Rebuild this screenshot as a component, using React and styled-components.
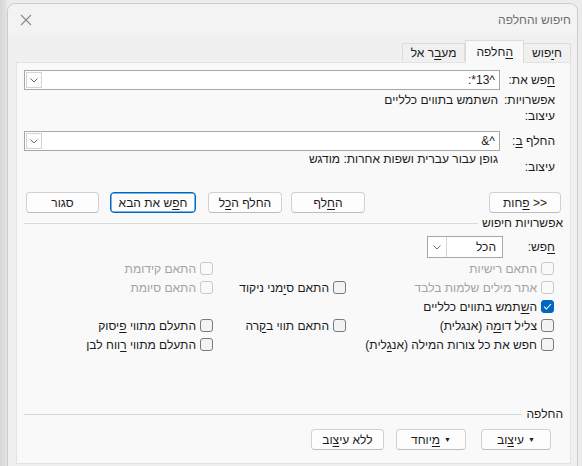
import React from "react";
import styled, { createGlobalStyle, css } from "styled-components";

const Global = createGlobalStyle`
  html, body {
    margin: 0;
    padding: 0;
    background: linear-gradient(90deg, #d6d6d6 0px, #e4e4e4 7px, #ececec 7px);
    font-family: "Liberation Sans", "DejaVu Sans", sans-serif;
    font-size: 12px;
    color: #1b1b1b;
    overflow: hidden;
  }
  u {
    text-underline-offset: 2px;
  }
`;

const Window = styled.div`
  margin: 3px 0 0 7px;
  width: 571px;
  height: 470px;
  box-sizing: border-box;
  border: 1px solid #cdcdcd;
  border-radius: 8px 8px 0 0;
  background: #f0f0f0;
  direction: rtl;
  display: flex;
  flex-direction: column;
`;

const TitleBar = styled.div`
  height: 32px;
  display: flex;
  align-items: center;
  justify-content: space-between;
  padding: 0 6px 0 12px;
  background: #f3f3f3;
  border-radius: 8px 8px 0 0;
`;

const Title = styled.span`
  color: #6e6e6e;
  font-size: 12px;
`;

const Tabs = styled.div`
  display: flex;
  align-items: flex-end;
  height: 22px;
  margin: 4px 6px 0 8px;
  position: relative;
  z-index: 1;
`;

const Tab = styled.div`
  height: 18px;
  padding: 0 8px;
  display: flex;
  align-items: center;
  box-sizing: border-box;
  border: 1px solid #dcdcdc;
  border-bottom: none;
  border-left: none;
  background: #f0f0f0;
  margin-bottom: 1px;
  ${(p) =>
    p.$active &&
    css`
      height: 23px;
      margin-bottom: -1px;
      background: #f9f9f9;
      border-left: 1px solid #dcdcdc;
      padding: 0 10px;
    `}
  ${(p) =>
    p.$last &&
    css`
      border-left: 1px solid #dcdcdc;
    `}
`;

const Panel = styled.div`
  margin: 0 6px 0 8px;
  height: 402px;
  box-sizing: border-box;
  border: 1px solid #e3e3e3;
  background: #f9f9f9;
  padding: 7px 15px 0 7px;
  display: flex;
  flex-direction: column;
`;

const FieldRow = styled.div`
  display: flex;
  align-items: center;
  height: 20px;
  margin-top: ${(p) => p.$top || 0}px;
`;

const Label = styled.div`
  width: ${(p) => p.$w || 55}px;
  flex-shrink: 0;
  white-space: nowrap;
  margin-top: ${(p) => p.$top || 0}px;
`;

const Combo = styled.div`
  flex: 1;
  height: 20px;
  box-sizing: border-box;
  border: 1px solid #a7a7a7;
  background: #fff;
  display: flex;
  align-items: center;
  justify-content: space-between;
  padding-right: 4px;
`;

const DropBtn = styled.div`
  width: 16px;
  height: 16px;
  margin-left: 1px;
  box-sizing: border-box;
  border: 1px solid #d4d4d4;
  background: #fdfdfd;
  display: flex;
  align-items: center;
  justify-content: center;
`;

const InfoRow = styled.div`
  display: flex;
  align-items: flex-start;
  line-height: 16px;
  margin-top: ${(p) => p.$top || 0}px;
`;

const Value = styled.div`
  white-space: nowrap;
`;

const ButtonRow = styled.div`
  display: flex;
  align-items: center;
  margin: 17px -6px 0 2px;
`;

const Spacer = styled.div`
  flex: 1;
`;

const Button = styled.div`
  width: ${(p) => p.$w || 72}px;
  height: 21px;
  box-sizing: border-box;
  border: 1px solid #d1d1d1;
  border-bottom-color: #bcbcbc;
  border-radius: 4px;
  background: #fdfdfd;
  display: flex;
  align-items: center;
  justify-content: center;
  gap: 4px;
  margin-left: ${(p) => p.$gap || 0}px;
  white-space: nowrap;
  ${(p) =>
    p.$focus &&
    css`
      border: 1px solid #0067c0;
      box-shadow: inset 0 0 0 0.5px #0067c0;
    `}
`;

const Section = styled.div`
  display: flex;
  align-items: center;
  gap: 4px;
  margin: ${(p) => p.$top || 0}px -8px 0 0;
  line-height: 14px;
`;

const Rule = styled.div`
  flex: 1;
  height: 1px;
  background: #dadada;
`;

const SearchSelectRow = styled.div`
  display: flex;
  align-items: center;
  margin-top: 6px;
  height: 22px;
`;

const Select = styled.div`
  width: 76px;
  height: 22px;
  box-sizing: border-box;
  border: 1px solid #a7a7a7;
  background: #fff;
  display: flex;
  align-items: center;
  justify-content: space-between;
  padding-right: 6px;
`;

const SelectArrow = styled.div`
  width: 18px;
  height: 20px;
  border-right: 1px solid #d4d4d4;
  display: flex;
  align-items: center;
  justify-content: center;
`;

const Options = styled.div`
  display: grid;
  grid-template-columns: 208px 133px 1fr;
  grid-auto-rows: 19px;
  margin: 1px 1px 0 0;
`;

const Check = styled.div`
  display: flex;
  align-items: center;
  gap: 4px;
  white-space: nowrap;
  color: ${(p) => (p.$disabled ? "#a3a3a3" : "#1b1b1b")};
  grid-column: ${(p) => p.$col};
`;

const Box = styled.div`
  width: 13px;
  height: 13px;
  box-sizing: border-box;
  border-radius: 3px;
  border: 1px solid ${(p) => (p.$disabled ? "#c9c9c9" : "#7a7a7a")};
  background: ${(p) => (p.$disabled ? "#f9f9f9" : "#f3f3f3")};
  display: flex;
  align-items: center;
  justify-content: center;
  ${(p) =>
    p.$checked &&
    css`
      border-color: #0067c0;
      background: #0067c0;
    `}
`;

const BottomButtons = styled.div`
  display: flex;
  margin: 8px 4px 0 0;
`;

const Caret = styled.span`
  font-size: 7px;
  line-height: 1;
`;

function Chevron() {
  return (
    <svg width="8" height="5" viewBox="0 0 8 5">
      <path d="M0.5 0.5 L4 4 L7.5 0.5" fill="none" stroke="#6a6a6a" strokeWidth="1" />
    </svg>
  );
}

function CloseIcon() {
  return (
    <svg width="12" height="12" viewBox="0 0 12 12">
      <path d="M1 1 L11 11 M11 1 L1 11" stroke="#8a8a8a" strokeWidth="1.1" />
    </svg>
  );
}

function CheckItem({ col, disabled, checked, children }) {
  return (
    <Check $col={col} $disabled={disabled}>
      <Box $disabled={disabled} $checked={checked}>
        {checked && (
          <svg width="9" height="7" viewBox="0 0 9 7">
            <path d="M1 3.6 L3.4 6 L8 1" fill="none" stroke="#fff" strokeWidth="1.1" />
          </svg>
        )}
      </Box>
      <span>{children}</span>
    </Check>
  );
}

export default function App() {
  return (
    <>
      <Global />
      <Window>
        <TitleBar>
          <Title>חיפוש והחלפה</Title>
          <CloseIcon />
        </TitleBar>
        <Tabs>
          <Tab>
            <span>
              ח<u>י</u>פוש
            </span>
          </Tab>
          <Tab $active>
            <span>
              <u>ה</u>חלפה
            </span>
          </Tab>
          <Tab $last>
            <span>
              מע<u>ב</u>ר אל
            </span>
          </Tab>
        </Tabs>
        <Panel>
          <FieldRow>
            <Label>
              <u>ח</u>פש את:
            </Label>
            <Combo>
              <span>^13*:</span>
              <DropBtn>
                <Chevron />
              </DropBtn>
            </Combo>
          </FieldRow>
          <InfoRow $top={2}>
            <Label $w={57}>אפשרויות:</Label>
            <Value>השתמש בתווים כלליים</Value>
          </InfoRow>
          <InfoRow>
            <Label $w={57}>עיצוב:</Label>
          </InfoRow>
          <FieldRow $top={7}>
            <Label>
              החלף <u>ב</u>:
            </Label>
            <Combo>
              <span>^&amp;</span>
              <DropBtn>
                <Chevron />
              </DropBtn>
            </Combo>
          </FieldRow>
          <InfoRow>
            <Label $w={57} $top={8}>
              עיצוב:
            </Label>
            <Value>גופן עבור עברית ושפות אחרות: מודגש</Value>
          </InfoRow>
          <ButtonRow>
            <Button $w={72}>
              <span>
                {"<<"} <u>פ</u>חות
              </span>
            </Button>
            <Spacer />
            <Button $w={74} $gap={9}>
              <span>
                ה<u>ח</u>לף
              </span>
            </Button>
            <Button $w={74} $gap={12}>
              <span>
                החלף ה<u>כ</u>ל
              </span>
            </Button>
            <Button $w={86} $gap={11} $focus>
              <span>
                ח<u>פ</u>ש את הבא
              </span>
            </Button>
            <Button $w={73}>
              <span>סגור</span>
            </Button>
          </ButtonRow>
          <Section $top={3}>
            <span>אפשרויות חיפוש</span>
            <Rule />
          </Section>
          <SearchSelectRow>
            <Label $w={52}>
              <u>ח</u>פש:
            </Label>
            <Select>
              <span>הכל</span>
              <SelectArrow>
                <Chevron />
              </SelectArrow>
            </Select>
          </SearchSelectRow>
          <Options>
            <CheckItem col={1} disabled>
              התאם רישיות
            </CheckItem>
            <CheckItem col={3} disabled>
              התאם קידומת
            </CheckItem>
            <CheckItem col={1} disabled>
              אתר מילים שלמות בלבד
            </CheckItem>
            <CheckItem col={2}>
              התאם ס<u>י</u>מני ניקוד
            </CheckItem>
            <CheckItem col={3} disabled>
              התאם סיומת
            </CheckItem>
            <CheckItem col={1} checked>
              ה<u>ש</u>תמש בתווים כלליים
            </CheckItem>
            <CheckItem col={1}>
              צליל דו<u>מ</u>ה (אנגלית)
            </CheckItem>
            <CheckItem col={2}>
              התאם תווי ב<u>ק</u>רה
            </CheckItem>
            <CheckItem col={3}>
              התעלם מתווי <u>פ</u>יסוק
            </CheckItem>
            <CheckItem col={1}>
              חפש את כל צורות המילה (אנ<u>ג</u>לית)
            </CheckItem>
            <CheckItem col={3}>
              התעלם מתווי <u>ר</u>ווח לבן
            </CheckItem>
          </Options>
          <Section $top={53}>
            <span>החלפה</span>
            <Rule />
          </Section>
          <BottomButtons>
            <Button $w={70} $gap={15}>
              <Caret>▼</Caret>
              <span>
                עי<u>צ</u>וב
              </span>
            </Button>
            <Button $w={70} $gap={12}>
              <Caret>▼</Caret>
              <span>
                <u>מ</u>יוחד
              </span>
            </Button>
            <Button $w={73}>
              <span>
                ללא עי<u>צ</u>וב
              </span>
            </Button>
          </BottomButtons>
        </Panel>
      </Window>
    </>
  );
}
